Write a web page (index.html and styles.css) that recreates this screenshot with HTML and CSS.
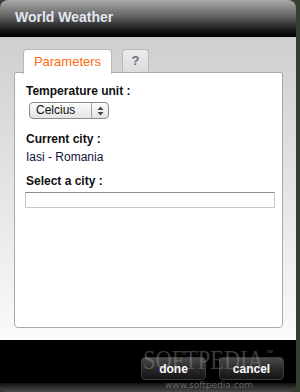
FILE: index.html
```html
<!DOCTYPE html>
<html lang="en">
<head>
  <meta charset="UTF-8" />
  <title>World Weather - Settings</title>
  <link rel="stylesheet" href="styles.css">
</head>
<body>
  <div class="window">
    <div class="titlebar">World Weather</div>
    <div class="content">
      <div class="tabs">
        <div class="tab active">Parameters</div>
        <div class="tab help">?</div>
      </div>
      <div class="panel">
        <div class="label">Temperature unit :</div>
        <div class="select">
          <span class="select-text">Celcius</span>
          <span class="select-arrows">
            <svg width="7" height="10" viewBox="0 0 7 10"><path d="M3.5 0.5 L6.5 4 L0.5 4 Z M0.5 6 L6.5 6 L3.5 9.5 Z" fill="#444"/></svg>
          </span>
        </div>
        <div class="label">Current city :</div>
        <div class="value">Iasi - Romania</div>
        <div class="label">Select a city :</div>
        <input class="city-input" type="text">
      </div>
    </div>
    <div class="footer">
      <button class="dark-btn">done</button>
      <button class="dark-btn">cancel</button>
      <div class="watermark">SOFTPEDIA</div>
      <div class="watermark-tm">™</div>
      <div class="watermark-url">www.softpedia.com</div>
    </div>
    <div class="bottom-edge"></div>
  </div>
</body>
</html>
```

FILE: styles.css
```css
body {
  margin: 0;
  background: #34402e;
  font-family: "Liberation Sans", Arial, sans-serif;
  width: 300px;
  height: 392px;
  overflow: hidden;
}
.window {
  width: 296px;
  height: 392px;
  border-radius: 8px 8px 6px 6px;
  overflow: hidden;
  display: flex;
  flex-direction: column;
  position: relative;
}
.titlebar {
  height: 37px;
  background: linear-gradient(#a9a9a9 0%, #6a6a6a 40%, #1a1a1a 80%, #000 100%);
  color: #e2e8f2;
  font-weight: bold;
  font-size: 14px;
  padding-left: 15px;
  line-height: 34px;
}
.content {
  height: 291px;
  background: linear-gradient(#cfcfcf, #fafafa);
  padding: 12px 13px 0 14px;
}
.tabs {
  display: flex;
  gap: 10px;
  padding-left: 9px;
  height: 23px;
  position: relative;
  z-index: 1;
}
.tab {
  border: 1px solid #b9b9b9;
  border-bottom: none;
  border-radius: 4px 4px 0 0;
  font-size: 13px;
}
.tab.active {
  width: 87px;
  height: 24px;
  background: #fff;
  color: #ff6a0e;
  text-align: center;
  line-height: 23px;
}
.tab.help {
  width: 25px;
  height: 22px;
  background: linear-gradient(#ececec, #dcdcdc);
  color: #6a7080;
  font-weight: bold;
  text-align: center;
  line-height: 22px;
}
.panel {
  background: #fff;
  border: 1px solid #a9a9a9;
  border-radius: 2px 2px 4px 4px;
  height: 243px;
  padding: 11px 7px 0 11px;
}
.label {
  font-size: 12px;
  font-weight: bold;
  color: #111;
  line-height: 14px;
}
.value {
  font-size: 12px;
  color: #12123a;
  margin: 4px 0 10px 0;
  line-height: 14px;
}
.select {
  margin: 4px 0 13px 3px;
  width: 78px;
  height: 15px;
  border: 1px solid #8a8a8a;
  border-radius: 4px;
  background: linear-gradient(#fbfbfb, #e4e4e4);
  display: flex;
  font-size: 12px;
  line-height: 15px;
}
.select-text {
  flex: 1;
  padding-left: 6px;
  color: #111;
}
.select-arrows {
  width: 16px;
  border-left: 1px solid #a0a0a0;
  display: flex;
  align-items: center;
  justify-content: center;
}
.city-input {
  display: block;
  box-sizing: border-box;
  width: 250px;
  height: 16px;
  margin: 4px 0 0 -1px;
  border: 1px solid #c8c8c8;
  border-top-color: #8c8c8c;
  padding: 0;
}
.footer {
  flex: 1;
  background: #000;
  display: flex;
  justify-content: flex-end;
  align-items: flex-start;
  gap: 13px;
  padding: 17px 12px 0 0;
  position: relative;
}
.dark-btn {
  width: 65px;
  height: 23px;
  border: 1px solid #3c3c3c;
  border-radius: 4px;
  background: linear-gradient(#4a4a4a, #2a2a2a 50%, #151515);
  color: #fff;
  font-family: "Liberation Sans", Arial, sans-serif;
  font-weight: bold;
  font-size: 12px;
  padding: 0;
}
.watermark {
  position: absolute;
  left: 143px;
  top: 6px;
  font-family: "Liberation Serif", "Times New Roman", serif;
  font-size: 28px;
  line-height: 28px;
  transform: scaleX(0.8);
  transform-origin: left top;
  color: rgba(170, 170, 170, 0.35);
  pointer-events: none;
}
.watermark-tm {
  position: absolute;
  left: 266px;
  top: 9px;
  font-size: 7px;
  color: rgba(170, 170, 170, 0.5);
}
.watermark-url {
  position: absolute;
  left: 165px;
  top: 40px;
  font-family: "DejaVu Sans", sans-serif;
  font-size: 9px;
  color: rgba(150, 150, 150, 0.6);
}
.bottom-edge {
  height: 9px;
  background: linear-gradient(#111, #4a4a4a);
}
```
